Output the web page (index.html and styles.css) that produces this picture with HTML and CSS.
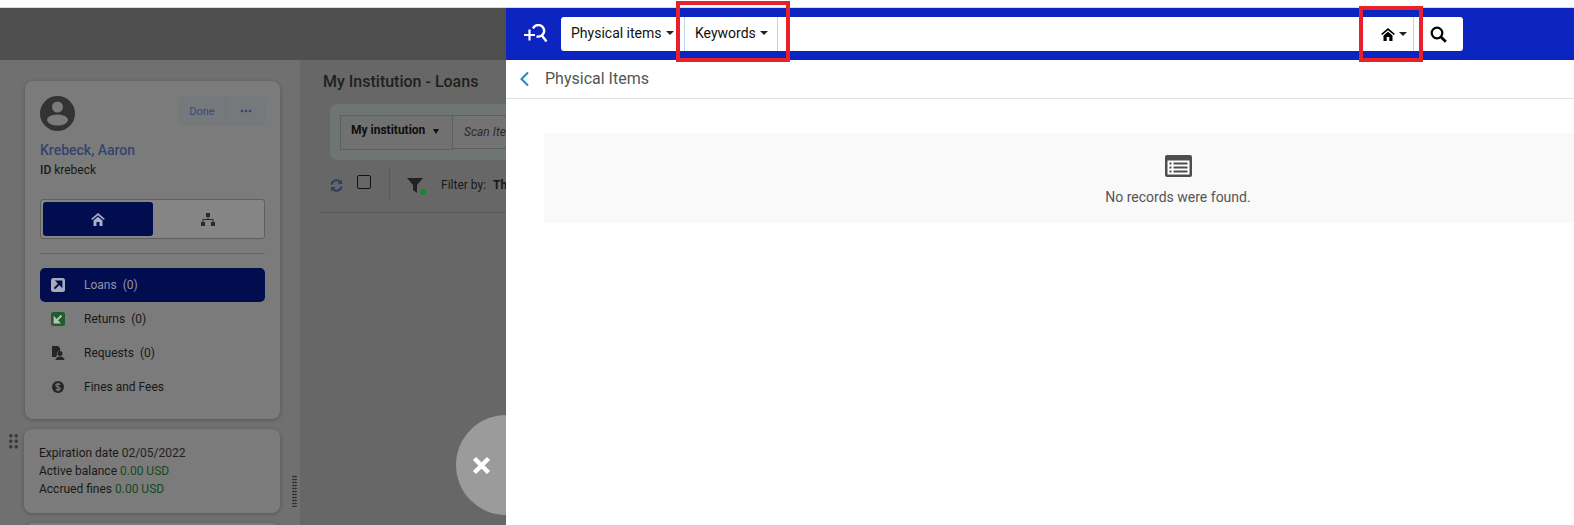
FILE: index.html
```html
<!DOCTYPE html>
<html lang="en">
<head>
    <meta charset="UTF-8">
    <title>Physical Items</title>
    <link rel="stylesheet" href="styles.css">
</head>
<body>
    <div class="top-strip"></div>
    <div class="app">
        <!-- dimmed page behind the slide-out -->
        <div class="back-page">
            <div class="back-header"></div>
            <div class="back-body">
                <aside class="sidebar">
                    <div class="card user-card">
                        <div class="user-top">
                            <svg class="avatar" viewBox="0 0 35 35"><circle cx="17.500" cy="17.500" r="17.500" fill="#333"/><circle cx="17.500" cy="11" r="5.500" fill="#7b7b7b"/><ellipse cx="17.500" cy="24" rx="10.500" ry="5.500" fill="#7b7b7b"/></svg>
                            <div class="user-btns">
                                <span class="btn-done">Done</span>
                                <span class="btn-more">
                                    <svg width="12" height="4" viewBox="0 0 12 4"><circle cx="2" cy="2" r="1.300" fill="#33446f"/><circle cx="6" cy="2" r="1.300" fill="#33446f"/><circle cx="10" cy="2" r="1.300" fill="#33446f"/></svg>
                                </span>
                            </div>
                        </div>
                        <div class="user-name">Krebeck, Aaron</div>
                        <div class="user-id"><span class="id-label">ID</span> krebeck</div>
                        <div class="toggle">
                            <div class="toggle-item active">
                                <svg width="14" height="13" viewBox="0 0 14 13"><path d="M7 0 L14 6 L12.500 6.800 L7 2.200 L1.500 6.800 L0 6 Z M2.500 7.500 L7 3.700 L11.500 7.500 V13 H8.500 V9 H5.500 V13 H2.500 Z" fill="#aab0c8"/></svg>
                            </div>
                            <div class="toggle-item">
                                <svg width="14" height="13" viewBox="0 0 14 13"><path d="M5 0 H9 V4 H7.500 V6 H12.500 V9 H14 V13 H10 V9 H11.500 V7 H2.500 V9 H4 V13 H0 V9 H1.500 V6 H6.500 V4 H5 Z" fill="#2b2b2b"/></svg>
                            </div>
                        </div>
                        <div class="user-line"></div>
                        <div class="menu">
                            <div class="menu-row active">
                                <svg class="menu-icon" viewBox="0 0 14 14"><rect width="14" height="14" rx="2.500" fill="#a9abbd"/><path d="M3.500 10.500 L9 5 M6 3.500 H10.500 V8 Z" stroke="#020d50" stroke-width="1.800" fill="#020d50"/></svg>
                                <span>Loans</span><span class="count">(0)</span>
                            </div>
                            <div class="menu-row">
                                <svg class="menu-icon" viewBox="0 0 14 14"><rect width="14" height="14" rx="2.500" fill="#1d5e2c"/><path d="M10.500 3.500 L5 9 M3.500 6 V10.500 H8 Z" stroke="#bdbdbd" stroke-width="1.800" fill="#bdbdbd"/></svg>
                                <span>Returns</span><span class="count">(0)</span>
                            </div>
                            <div class="menu-row">
                                <svg class="menu-icon" viewBox="0 0 14 14"><path d="M1 0 H7 L9 2 V5 A3 3 0 0 0 6 9 L5 11 H1 Z" fill="#262626"/><circle cx="9" cy="7.500" r="2.500" fill="#262626"/><path d="M4.500 14 Q5 10.500 9 10.500 Q13 10.500 13.500 14 Z" fill="#262626"/></svg>
                                <span>Requests</span><span class="count">(0)</span>
                            </div>
                            <div class="menu-row">
                                <svg class="menu-icon" viewBox="0 0 14 14"><circle cx="7" cy="7" r="6" fill="#262626"/><path d="M9.200 5 Q8.500 3.900 7 3.900 Q4.900 3.900 4.900 5.400 Q4.900 6.700 7 7 Q9.200 7.300 9.200 8.600 Q9.200 10.100 7 10.100 Q5.500 10.100 4.800 9 M7 2.800 V11.200" stroke="#7b7b7b" stroke-width="1.200" fill="none"/></svg>
                                <span>Fines and Fees</span>
                            </div>
                        </div>
                    </div>
                    <div class="info-wrap">
                        <span class="grip"></span>
                        <div class="card info-card">
                            <div>Expiration date <span class="info-val">02/05/2022</span></div>
                            <div>Active balance <span class="info-ok">0.00 USD</span></div>
                            <div>Accrued fines <span class="info-ok">0.00 USD</span></div>
                        </div>
                    </div>
                    <div class="card stub-card"></div>
                    <span class="resize-dots"></span>
                </aside>
                <main class="loans">
                    <h2 class="loans-title">My Institution - Loans</h2>
                    <div class="scan-band">
                        <div class="scan-select">My institution <i class="mini-caret"></i></div>
                        <div class="scan-input">Scan Item</div>
                    </div>
                    <div class="tools">
                        <svg class="refresh" width="13" height="13" viewBox="0 0 13 13"><path d="M1.500 5.500 A5 5 0 0 1 10 2.800 M11.500 7.500 A5 5 0 0 1 3 10.200" stroke="#2c3e66" stroke-width="2" fill="none"/><path d="M12 0.500 V5 H7.500 Z M1 12.500 V8 H5.500 Z" fill="#2c3e66"/></svg>
                        <span class="check"></span>
                        <span class="tools-sep"></span>
                        <span class="funnel">
                            <svg width="18" height="16" viewBox="0 0 18 16"><path d="M0 0 H16 L10 7 V15 L6 12 V7 Z" fill="#222"/></svg>
                            <i class="dot-ok"></i>
                        </span>
                        <span class="filter-label">Filter by:</span>
                        <b class="filter-val">This</b>
                    </div>
                    <div class="tools-line"></div>
                </main>
            </div>
        </div>

        <!-- close button sits half under the panel -->
        <div class="close-btn">
            <svg width="19" height="19" viewBox="0 0 19 19"><path d="M2.500 2.500 L16.500 16.500 M16.500 2.500 L2.500 16.500" stroke="#fff" stroke-width="4.500"/></svg>
        </div>

        <!-- slide-out panel -->
        <section class="panel">
            <div class="search-bar">
                <svg class="logo" width="24" height="20" viewBox="0 0 24 20"><path d="M0 11 H11 M5.500 5.500 V16.500" stroke="#fff" stroke-width="2.200" fill="none"/><path d="M9 4.500 A5.800 5.800 0 1 1 12.500 12.300 M17.500 11 L22.500 17.500" stroke="#fff" stroke-width="2.400" fill="none"/></svg>
                <div class="search-box">
                    <div class="search-type type-scope">Physical items <i class="caret"></i></div>
                    <div class="search-type type-field">Keywords <i class="caret"></i></div>
                    <div class="search-space"></div>
                    <div class="search-home">
                        <svg width="14" height="13" viewBox="0 0 14 13"><path d="M7 0 L14 6 L12.800 7 L7 2.200 L1.200 7 L0 6 Z M2.500 7.500 L7 3.700 L11.500 7.500 V13 H8.300 V9 H5.700 V13 H2.500 Z" fill="#000"/></svg>
                        <i class="caret"></i>
                    </div>
                    <div class="search-go">
                        <svg width="17" height="17" viewBox="0 0 17 17"><circle cx="7" cy="7" r="5.300" stroke="#000" stroke-width="2.200" fill="none"/><path d="M11 11 L15.800 15.800" stroke="#000" stroke-width="2.800"/></svg>
                    </div>
                </div>
            </div>
            <div class="crumb">
                <svg width="11" height="16" viewBox="0 0 11 16"><path d="M9 1.500 L2.500 8 L9 14.500" stroke="#1f8ac0" stroke-width="2" fill="none"/></svg>
                <span class="crumb-title">Physical Items</span>
            </div>
            <div class="empty">
                <svg class="empty-icon" width="27" height="22" viewBox="0 0 27 22"><rect width="27" height="22" rx="2" fill="#4d4d4d"/><rect x="2.500" y="5.500" width="22" height="14" fill="#fff"/><path d="M4.500 8.500 H6.500 M8.500 8.500 H22.500 M4.500 12.500 H6.500 M8.500 12.500 H22.500 M4.500 16.500 H6.500 M8.500 16.500 H22.500" stroke="#4d4d4d" stroke-width="1.800"/></svg>
                <div class="empty-text">No records were found.</div>
            </div>
            <span class="mark mark-keywords"></span>
            <span class="mark mark-home"></span>
        </section>
    </div>
</body>
</html>
```

FILE: styles.css
```css
* {
    box-sizing: border-box;
}
html, body {
    height: 100%;
}
body {
    margin: 0;
    overflow: hidden;
    background-color: #fff;
    font-family: Roboto, "Liberation Sans", sans-serif;
    font-size: 12px;
    color: #181818;
}
i {
    display: inline-block;
}
.top-strip {
    height: 8px;
    border-bottom: 1px solid #dcdcdc;
}
.app {
    position: relative;
    display: flex;
    height: 517px;
}

/* dimmed page */
.back-page {
    width: 506px;
    flex: none;
    display: flex;
    flex-direction: column;
    overflow: hidden;
    background-color: #676767;
}
.back-header {
    height: 52px;
    flex: none;
    background-color: #4f4f4f;
}
.back-body {
    display: flex;
    flex: 1;
    min-height: 0;
}
.sidebar {
    position: relative;
    width: 300px;
    flex: none;
    padding: 21px 20px 0 25px;
    background-color: #707070;
}
.card {
    background-color: #7b7b7b;
    border-radius: 8px;
    box-shadow: 0 1px 4px rgba(0, 0, 0, 0.25);
}
.user-card {
    height: 338px;
    padding: 15px 15px 0;
}
.user-top {
    display: flex;
    justify-content: space-between;
}
.avatar {
    width: 35px;
    height: 35px;
}
.user-btns {
    display: flex;
    height: 30px;
    font-size: 11px;
    color: #3b4a78;
}
.btn-done, .btn-more {
    display: flex;
    align-items: center;
    justify-content: center;
    background-color: #75797b;
}
.btn-done {
    width: 46px;
    border-radius: 3px 0 0 3px;
}
.btn-more {
    width: 40px;
    border-left: 1px solid #717577;
    border-radius: 0 3px 3px 0;
}
.user-name {
    margin-top: 10px;
    font-size: 14px;
    font-weight: 500;
    line-height: 18px;
    color: #33446f;
}
.user-id {
    margin-top: 3px;
    line-height: 16px;
}
.id-label {
    font-weight: 500;
}
.toggle {
    display: flex;
    height: 40px;
    margin-top: 21px;
    padding: 2px;
    background-color: #858585;
    border: 1px solid #5f5f5f;
    border-radius: 3px;
}
.toggle-item {
    display: flex;
    flex: 1;
    align-items: center;
    justify-content: center;
}
.toggle-item.active {
    flex: none;
    width: 110px;
    background-color: #020d50;
    border-radius: 3px;
}
.user-line {
    height: 1px;
    margin: 14px 0;
    background-color: #666;
}
.menu-row {
    display: flex;
    align-items: center;
    gap: 5px;
    height: 34px;
    padding-left: 11px;
    border-radius: 5px;
}
.menu-row.active {
    background-color: #020d50;
    color: #8f95ad;
}
.menu-icon {
    width: 14px;
    height: 14px;
    margin-right: 14px;
    flex: none;
}
.count {
    margin-left: 1px;
}
.info-wrap {
    position: relative;
    margin: 10px 0 0 -1px;
}
.grip {
    position: absolute;
    left: -16px;
    top: 4px;
    width: 11px;
    height: 16px;
    background-image: radial-gradient(circle, #3a3a3a 1.6px, transparent 1.9px);
    background-size: 5.500px 5.500px;
}
.info-card {
    height: 84px;
    padding: 15px 15px 0;
    line-height: 18px;
}
.info-val {
    color: #222;
}
.info-ok {
    color: #134a1c;
}
.stub-card {
    height: 40px;
    margin-top: 10px;
}
.resize-dots {
    position: absolute;
    right: 3px;
    top: 415px;
    width: 5px;
    height: 32px;
    background-image: radial-gradient(circle, #333 0.9px, transparent 1.1px);
    background-size: 2.500px 3px;
}

.loans {
    flex: 1;
    min-width: 0;
    padding: 12px 0 0 20px;
}
.loans-title {
    margin: 0;
    padding-left: 3px;
    font-size: 16px;
    font-weight: 500;
    line-height: 20px;
    white-space: nowrap;
    color: #1f1f1f;
}
.scan-band {
    display: flex;
    height: 56px;
    width: 300px;
    margin: 12px 0 0 10px;
    padding: 11px 10px;
    background-color: #6f7575;
    border-radius: 8px;
}
.scan-select {
    display: flex;
    align-items: center;
    gap: 8px;
    width: 113px;
    height: 35px;
    flex: none;
    padding: 0 0 6px 10px;
    background-color: #717171;
    border: 1px solid #5c5f5f;
    font-weight: 700;
    white-space: nowrap;
    color: #0e0e0e;
}
.scan-input {
    display: flex;
    align-items: center;
    flex: 1;
    padding-left: 11px;
    background-color: #737373;
    border: 1px solid #5c5f5f;
    border-left: none;
    font-style: italic;
    white-space: nowrap;
    color: #2c2c2c;
}
.mini-caret {
    width: 0;
    height: 0;
    margin-top: 3px;
    border-left: 3px solid transparent;
    border-right: 3px solid transparent;
    border-top: 5px solid #111;
}
.tools {
    display: flex;
    align-items: center;
    height: 34px;
    margin-top: 8px;
    padding-left: 10px;
    white-space: nowrap;
}
.tools > * {
    flex: none;
}
.check {
    width: 14px;
    height: 14px;
    margin: -6px 0 0 14px;
    border: 1px solid #111;
    border-radius: 2px;
}
.tools-sep {
    width: 1px;
    height: 34px;
    margin: 0 17px 0 18px;
    background-color: #5a5a5a;
}
.funnel {
    position: relative;
    display: flex;
    width: 18px;
    margin-top: 2px;
}
.dot-ok {
    position: absolute;
    right: -1px;
    bottom: -1px;
    width: 6px;
    height: 6px;
    background-color: #128a2a;
    border-radius: 50%;
}
.filter-label {
    margin-left: 16px;
}
.filter-val {
    margin-left: 7px;
}
.tools-line {
    height: 1px;
    margin-top: 10px;
    background-color: #5a5a5a;
}

.close-btn {
    position: absolute;
    left: 456px;
    top: 407px;
    width: 100px;
    height: 100px;
    display: flex;
    align-items: center;
    padding-left: 16px;
    background-color: #9b9b9b;
    border-radius: 50%;
}

/* slide-out panel */
.panel {
    position: relative;
    flex: 1;
    min-width: 0;
    z-index: 1;
    background-color: #fff;
}
.search-bar {
    display: flex;
    align-items: center;
    height: 52px;
    padding-left: 18px;
    background-color: #0c24c0;
}
.logo {
    flex: none;
    margin-right: 13px;
}
.search-box {
    display: flex;
    align-items: center;
    width: 902px;
    height: 34px;
    background-color: #fff;
    border-radius: 3px;
    font-size: 14px;
    color: #111;
}
.search-type {
    display: flex;
    align-items: center;
    height: 100%;
    padding-bottom: 2px;
    white-space: nowrap;
}
.type-scope {
    width: 123px;
    padding-left: 10px;
}
.type-field {
    width: 94px;
    padding-left: 10px;
    border-left: 1px solid #b5d6e8;
    border-right: 1px solid #b5d6e8;
}
.caret {
    width: 0;
    height: 0;
    margin-left: 4px;
    border-left: 4px solid transparent;
    border-right: 4px solid transparent;
    border-top: 4px solid #222;
}
.search-space {
    flex: 1;
}
.search-home {
    display: flex;
    align-items: center;
    justify-content: flex-end;
    height: 100%;
    padding-right: 6px;
    border-right: 1px solid #b5d6e8;
}
.search-go {
    display: flex;
    width: 49px;
    padding-left: 16px;
}
.crumb {
    display: flex;
    align-items: center;
    height: 39px;
    padding-left: 13px;
    border-bottom: 1px solid #e2e2e2;
}
.crumb-title {
    margin: -2px 0 0 15px;
    font-size: 16px;
    color: #555;
}
.empty {
    display: flex;
    flex-direction: column;
    align-items: center;
    height: 90px;
    margin: 34px 0 0 38px;
    padding: 22px 0 0 238px;
    background-color: #f9f9f9;
}
.empty-text {
    margin-top: 12px;
    font-size: 14px;
    color: #555;
}
.mark {
    position: absolute;
    border: 4px solid #e8202a;
}
.mark-keywords {
    left: 170px;
    top: -7px;
    width: 114px;
    height: 61px;
}
.mark-home {
    left: 853px;
    top: -2px;
    width: 64px;
    height: 56px;
}
```
